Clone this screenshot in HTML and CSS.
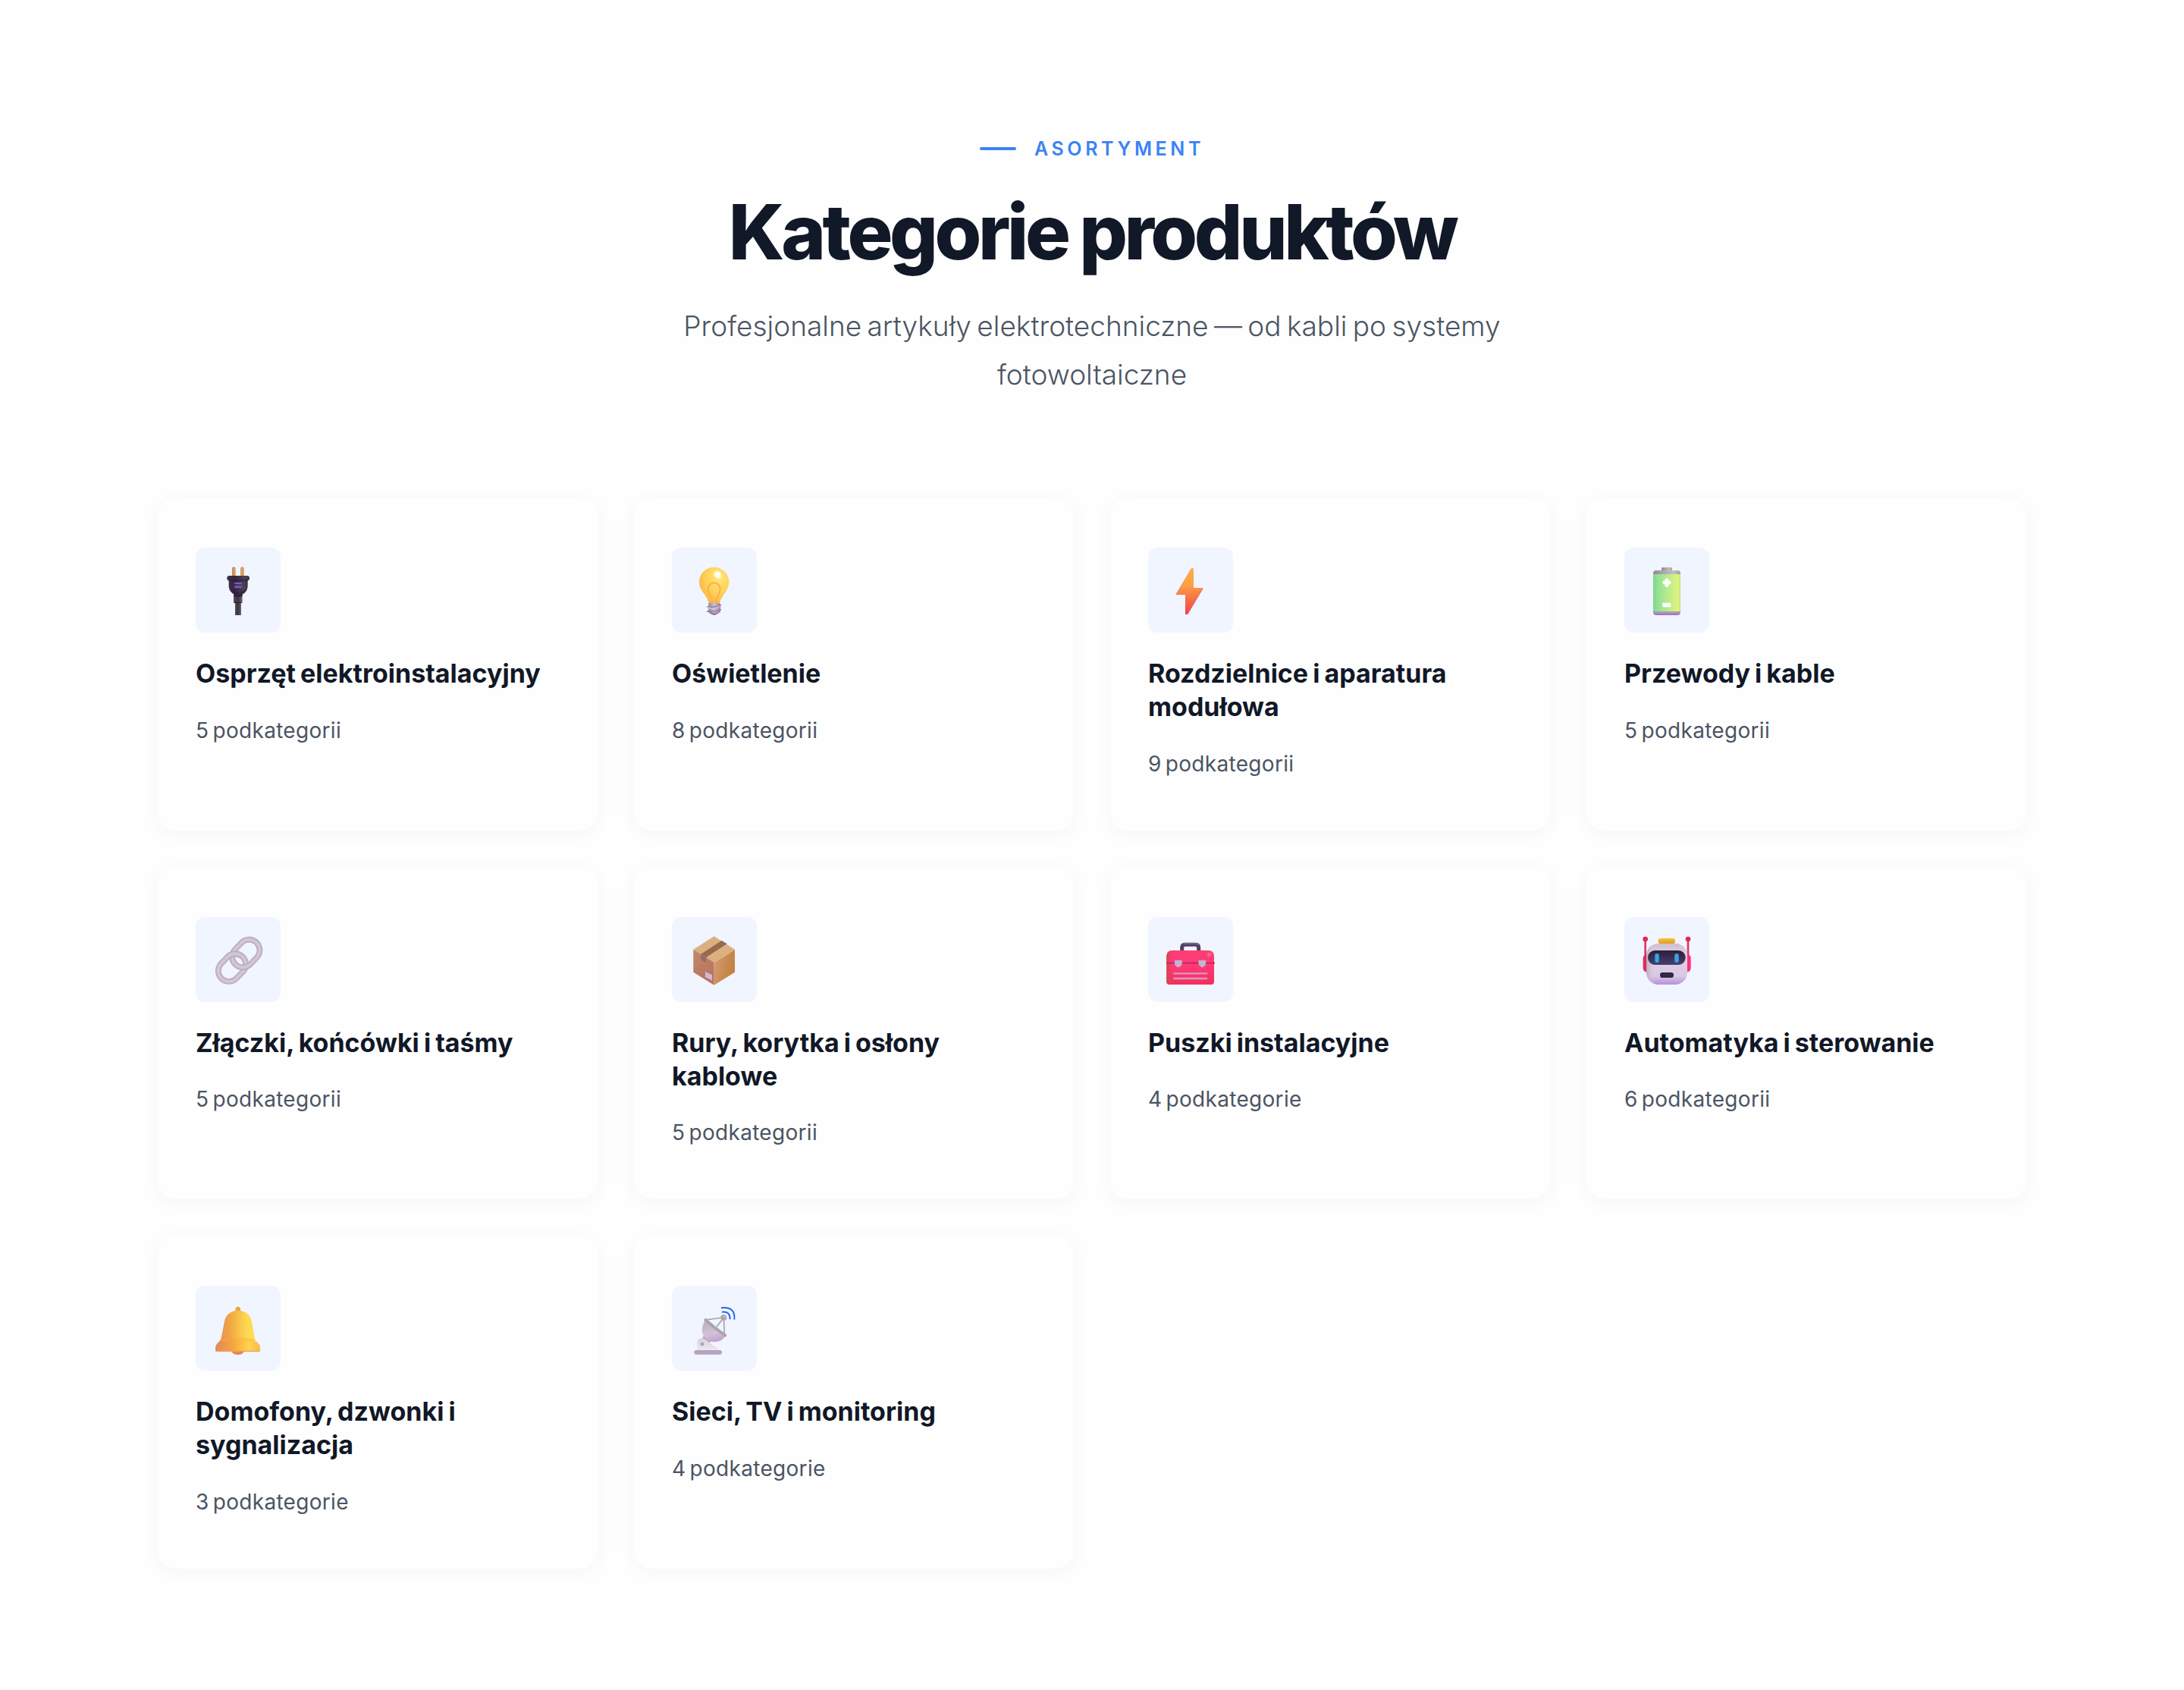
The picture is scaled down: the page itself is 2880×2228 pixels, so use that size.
FILE: index.html
```
<!DOCTYPE html>
<html lang="pl">
<head>
    <meta charset="UTF-8">
    <meta name="viewport" content="width=device-width, initial-scale=1.0">
    <title>Kategorie produktów</title>
    <link rel="stylesheet" href="styles.css">
</head>
<body>
    <section class="categories">
        <div class="section-header">
            <span class="section-tag">Asortyment</span>
            <h2 class="section-title">Kategorie produktów</h2>
            <p class="section-subtitle">Profesjonalne artykuły elektrotechniczne — od kabli po systemy fotowoltaiczne</p>
        </div>

        <div class="categories-grid">
            <div class="category-card">
                <div class="category-icon">
                    <svg viewBox="0 0 336 336">
                        <defs>
                            <linearGradient id="prong"><stop offset="0" stop-color="#c98a55"/><stop offset=".5" stop-color="#e6ab72"/><stop offset="1" stop-color="#d39560"/></linearGradient>
                            <linearGradient id="plugBody"><stop offset="0" stop-color="#3a3042"/><stop offset=".35" stop-color="#35263f"/><stop offset=".8" stop-color="#4b4352"/><stop offset="1" stop-color="#3a3042"/></linearGradient>
                            <linearGradient id="cord"><stop offset="0" stop-color="#5a535f"/><stop offset=".4" stop-color="#3b3540"/><stop offset=".75" stop-color="#4a454e"/><stop offset="1" stop-color="#77717d"/></linearGradient>
                        </defs>
                        <path d="M144 114V84q0-8 7-8t7 8v30zM177 114V84q0-8 7-8t7 8v30z" fill="url(#prong)"/>
                        <rect x="156" y="214" width="24" height="53" fill="url(#cord)"/>
                        <path d="M150 180h35v36q0 3-3 3h-29q-3 0-3-3z" fill="url(#cord)"/>
                        <path d="M150 186h35v5q-17 7-35 0zM152 216h31v3h-31z" fill="#2f1d3c"/>
                        <path d="M131 126h75v24c0 20-13 38-37 38s-38-18-38-38z" fill="url(#plugBody)"/>
                        <path d="M135 160q10 28 34 28t34-28q-14 15-34 15t-34-15z" fill="#341b49" opacity=".7"/>
                        <rect x="124" y="111" width="89" height="19" rx="9.5" fill="url(#plugBody)"/>
                        <path d="M132 128h73v3h-73z" fill="#2b173a"/>
                        <rect x="153" y="138" width="30" height="7" rx="3" fill="#8155c9"/>
                        <rect x="153" y="151" width="30" height="9" rx="3" fill="#7d50c6"/>
                    </svg>
                </div>
                <h3 class="category-name">Osprzęt elektroinstalacyjny</h3>
                <p class="category-count">5 podkategorii</p>
            </div>

            <div class="category-card">
                <div class="category-icon">
                    <svg viewBox="0 0 336 336">
                        <defs>
                            <radialGradient id="bulb" cx=".66" cy=".3" r=".75"><stop offset="0" stop-color="#ffe679"/><stop offset=".5" stop-color="#ffd45a"/><stop offset="1" stop-color="#f9b642"/></radialGradient>
                            <linearGradient id="bulbBase"><stop offset="0" stop-color="#8d7b93"/><stop offset=".5" stop-color="#cbbfcd"/><stop offset="1" stop-color="#9c88a5"/></linearGradient>
                            <radialGradient id="shine"><stop offset="0" stop-color="#fff"/><stop offset=".55" stop-color="#fffbe8"/><stop offset="1" stop-color="#ffe679" stop-opacity="0"/></radialGradient>
                        </defs>
                        <path d="M167 77c33 0 59 26 59 59 0 36-30 50-37 83h-43c-7-33-38-47-38-83 0-33 26-59 59-59z" fill="url(#bulb)"/>
                        <path d="M160 219c0-31-17-34-17-56a24 24 0 0 1 48 0c0 22-16 25-16 56" fill="none" stroke="#fcae52" stroke-width="6"/>
                        <ellipse cx="181" cy="107" rx="22" ry="19" transform="rotate(40 181 107)" fill="url(#shine)"/>
                        <path d="M145 219h45l3 8-1 28-10 5-15 7-16-7-10-7 4-8z" fill="url(#bulbBase)"/>
                        <path d="M140 233q26 7 54-6M140 252q28 5 54-7" fill="none" stroke="#8f7a9a" stroke-width="4" stroke-linecap="round"/>
                        <path d="M140 237q26 7 54-6" fill="none" stroke="#d5cad7" stroke-width="4" stroke-linecap="round"/>
                        <path d="M148 257q22 4 40-1-5 6-12 8-9 6-17 0-7-2-11-7z" fill="#9470b8"/>
                    </svg>
                </div>
                <h3 class="category-name">Oświetlenie</h3>
                <p class="category-count">8 podkategorii</p>
            </div>

            <div class="category-card">
                <div class="category-icon">
                    <svg viewBox="0 0 336 336">
                        <defs>
                            <linearGradient id="bolt" x1="0" y1="0" x2="0" y2="1"><stop offset="0" stop-color="#fcb144"/><stop offset=".35" stop-color="#fda143"/><stop offset=".65" stop-color="#f97343"/><stop offset="1" stop-color="#ee4150"/></linearGradient>
                        </defs>
                        <path d="M172 82h8v77h36q2 0 1 2l-61 103h-9v-78h-34q-3 0-2-3z" fill="url(#bolt)"/>
                        <path d="M172 82l-61 102" fill="none" stroke="#e08e50" stroke-width="2"/>
                        <path d="M216 162l-60 101" fill="none" stroke="#f2607c" stroke-width="3"/>
                        <path d="M112 185h35" fill="none" stroke="#df8350" stroke-width="2"/>
                    </svg>
                </div>
                <h3 class="category-name">Rozdzielnice i aparatura modułowa</h3>
                <p class="category-count">9 podkategorii</p>
            </div>

            <div class="category-card">
                <div class="category-icon">
                    <svg viewBox="0 0 336 336">
                        <defs>
                            <linearGradient id="cell"><stop offset="0" stop-color="#83d58d"/><stop offset=".2" stop-color="#94e395"/><stop offset=".75" stop-color="#d0f083"/><stop offset=".93" stop-color="#dcf57f"/><stop offset="1" stop-color="#c6dc7c"/></linearGradient>
                            <linearGradient id="metal"><stop offset="0" stop-color="#8f8c90"/><stop offset=".3" stop-color="#a5a3a6"/><stop offset=".75" stop-color="#c2c0c3"/><stop offset="1" stop-color="#a19fa2"/></linearGradient>
                            <linearGradient id="cellBottom" x1="0" y1="0" x2="0" y2="1"><stop offset="0" stop-color="#aaa1ad"/><stop offset=".5" stop-color="#ab90bf"/><stop offset="1" stop-color="#9768c0"/></linearGradient>
                        </defs>
                        <rect x="147" y="78" width="42" height="20" rx="4" fill="url(#metal)"/>
                        <path d="M114 106v-5q0-11 12-11h84q12 0 12 11v5z" fill="url(#metal)"/>
                        <path d="M114 252h108v4q0 11-12 11h-84q-12 0-12-11z" fill="url(#cellBottom)"/>
                        <path d="M114 105h108v147H114z" fill="url(#cell)"/>
                        <path d="M162 123h12v9h9v12h-9v10h-12v-10h-9v-12h9zM152 219h31v15h-31z" fill="#fff" stroke="#fff" stroke-width="2" stroke-linejoin="round"/>
                    </svg>
                </div>
                <h3 class="category-name">Przewody i kable</h3>
                <p class="category-count">5 podkategorii</p>
            </div>

            <div class="category-card">
                <div class="category-icon">
                    <svg viewBox="0 0 336 336">
                        <defs>
                            <g id="ring" fill="none">
                                <rect x="-60" y="-42" width="120" height="84" rx="42" stroke="#b7a8be" stroke-width="23"/>
                                <rect x="-60" y="-42" width="120" height="84" rx="42" stroke="#c5b8ca" stroke-width="17"/>
                                <rect x="-60" y="-42" width="120" height="84" rx="42" stroke="#d3c8d7" stroke-width="9"/>
                            </g>
                            <clipPath id="ringOver"><path d="M110 118h66v48h-66z"/></clipPath>
                        </defs>
                        <use href="#ring" transform="translate(144 200) rotate(-46)"/>
                        <use href="#ring" transform="translate(199 144) rotate(-46)"/>
                        <g clip-path="url(#ringOver)"><use href="#ring" transform="translate(144 200) rotate(-46)"/></g>
                    </svg>
                </div>
                <h3 class="category-name">Złączki, końcówki i taśmy</h3>
                <p class="category-count">5 podkategorii</p>
            </div>

            <div class="category-card">
                <div class="category-icon">
                    <svg viewBox="0 0 336 336">
                        <defs>
                            <linearGradient id="boxLeft" x1="0" y1="0" x2=".4" y2="1"><stop offset="0" stop-color="#c28a6b"/><stop offset="1" stop-color="#b5745c"/></linearGradient>
                            <linearGradient id="boxRight" x1="0" y1=".3" x2="1" y2=".7"><stop offset="0" stop-color="#d69a73"/><stop offset=".5" stop-color="#c98b54"/><stop offset="1" stop-color="#c1803f"/></linearGradient>
                        </defs>
                        <path d="M167 76l82 52-82 54-82-54z" fill="#dab080"/>
                        <path d="M85 128l82 52v89l-82-51z" fill="url(#boxLeft)"/>
                        <path d="M249 128l-82 52v89l82-51z" fill="url(#boxRight)"/>
                        <path d="M167 180l82-52" stroke="#e5b78c" stroke-width="3"/>
                        <path d="M197 93l21 13-82 53-21-13z" fill="#99694f"/>
                        <path d="M115 146l21 13v22l-21-12z" fill="#936f62"/>
                        <path d="M132 216l27 13v22l-27-14z" fill="#cfb8d9"/>
                    </svg>
                </div>
                <h3 class="category-name">Rury, korytka i osłony kablowe</h3>
                <p class="category-count">5 podkategorii</p>
            </div>

            <div class="category-card">
                <div class="category-icon">
                    <svg viewBox="0 0 336 336">
                        <defs>
                            <linearGradient id="tool" x1="0" y1="0" x2="0" y2="1"><stop offset="0" stop-color="#fb3f73"/><stop offset=".4" stop-color="#ff3a78"/><stop offset="1" stop-color="#f42f5e"/></linearGradient>
                            <linearGradient id="toolEdge"><stop offset="0" stop-color="#c44a4d"/><stop offset="1" stop-color="#e84359" stop-opacity="0"/></linearGradient>
                            <radialGradient id="toolShine"><stop offset="0" stop-color="#ff8ca8"/><stop offset="1" stop-color="#ff4079" stop-opacity="0"/></radialGradient>
                        </defs>
                        <path d="M134 136v-15q0-12 12-12h42q12 0 12 12v15" fill="none" stroke="#503f62" stroke-width="15"/>
                        <path d="M140 107q4-2 8-2h40q8 0 11 6" fill="none" stroke="#7d6b8c" stroke-width="4"/>
                        <path d="M73 155q0-23 23-23h142q23 0 23 23v100q0 12-12 12H85q-12 0-12-12z" fill="url(#tool)"/>
                        <path d="M73 155q0-23 23-23v135H85q-12 0-12-12z" fill="url(#toolEdge)"/>
                        <circle cx="242" cy="149" r="15" fill="url(#toolShine)"/>
                        <path d="M72 182h192" stroke="#c22453" stroke-width="5"/>
                        <path d="M105 171h29v13q0 10-15 15-14-5-14-15zM200 171h28v13q0 10-14 15-14-5-14-15z" fill="#c9b2cf" stroke="#b294bb" stroke-width="2"/>
                        <path d="M103 223h129M103 243h129" stroke="#d49bc4" stroke-width="7" stroke-linecap="round"/>
                    </svg>
                </div>
                <h3 class="category-name">Puszki instalacyjne</h3>
                <p class="category-count">4 podkategorie</p>
            </div>

            <div class="category-card">
                <div class="category-icon">
                    <svg viewBox="0 0 336 336">
                        <defs>
                            <linearGradient id="head" x1="0" y1="0" x2="0" y2="1"><stop offset="0" stop-color="#cfbfd0"/><stop offset=".3" stop-color="#dfd4e6"/><stop offset=".8" stop-color="#d9c8e3"/><stop offset="1" stop-color="#b78ed9"/></linearGradient>
                            <linearGradient id="headSide"><stop offset="0" stop-color="#b49fb6" stop-opacity=".8"/><stop offset=".2" stop-color="#d9cde0" stop-opacity="0"/></linearGradient>
                            <linearGradient id="visor" x1="0" y1="0" x2="0" y2="1"><stop offset="0" stop-color="#2c1d39"/><stop offset="1" stop-color="#48406e"/></linearGradient>
                            <linearGradient id="lamp" x1="0" y1="0" x2="0" y2="1"><stop offset="0" stop-color="#fdc52f"/><stop offset="1" stop-color="#dd9c2d"/></linearGradient>
                            <linearGradient id="ear"><stop offset="0" stop-color="#d72e58"/><stop offset="1" stop-color="#ff3080"/></linearGradient>
                        </defs>
                        <path d="M79 90h8v62h-8zM248 90h8v62h-8z" fill="#e03663"/>
                        <circle cx="83" cy="87" r="10" fill="#e5264f"/>
                        <circle cx="252" cy="87" r="10" fill="#e5264f"/>
                        <path d="M92 146v73q-18-2-18-17v-40q0-14 18-16zM245 146v73q18-2 18-17v-40q0-14-18-16z" fill="url(#ear)"/>
                        <rect x="87" y="104" width="162" height="163" rx="48" fill="url(#head)"/>
                        <rect x="87" y="104" width="162" height="163" rx="48" fill="url(#headSide)"/>
                        <rect x="134" y="84" width="67" height="21" rx="10" fill="url(#lamp)"/>
                        <rect x="93" y="132" width="149" height="57" rx="28" fill="url(#visor)"/>
                        <rect x="120" y="144" width="18" height="37" rx="9" fill="#2f94d8"/>
                        <rect x="198" y="144" width="18" height="37" rx="9" fill="#2f94d8"/>
                        <path d="M129 150v25M207 150v25" stroke="#42aaea" stroke-width="6" stroke-linecap="round"/>
                        <rect x="141" y="219" width="54" height="21" rx="10" fill="#33264a"/>
                    </svg>
                </div>
                <h3 class="category-name">Automatyka i sterowanie</h3>
                <p class="category-count">6 podkategorii</p>
            </div>

            <div class="category-card">
                <div class="category-icon">
                    <svg viewBox="0 0 336 336">
                        <defs>
                            <linearGradient id="bell"><stop offset="0" stop-color="#dd8a5e"/><stop offset=".3" stop-color="#f1a342"/><stop offset=".7" stop-color="#ffd851"/><stop offset=".9" stop-color="#ffdf5c"/><stop offset="1" stop-color="#f9b74b"/></linearGradient>
                            <linearGradient id="bellLip"><stop offset="0" stop-color="#e0885c"/><stop offset=".4" stop-color="#f6a63c"/><stop offset=".75" stop-color="#ffd44f"/><stop offset="1" stop-color="#fbb84a"/></linearGradient>
                        </defs>
                        <ellipse cx="167" cy="259" rx="24" ry="14" fill="#ea8450"/>
                        <path d="M158 104V92q0-9 9-9t10 9v12z" fill="#eda136"/>
                        <path d="M168 98c29 0 49 17 54 43l12 69c2 12 20 18 21 33v13q0 5-5 5H84q-5 0-5-5v-13c1-15 18-20 22-35l13-67c5-26 25-43 54-43z" fill="url(#bell)"/>
                        <path d="M97 221q70-14 142 0 15 9 16 24v11q0 5-5 5H84q-5 0-5-5v-11q2-15 18-24z" fill="url(#bellLip)"/>
                        <path d="M102 216q66-10 132 0" fill="none" stroke="#f6ab3c" stroke-width="9" opacity=".4"/>
                        <path d="M82 259h170" stroke="#f59a6a" stroke-width="4" stroke-linecap="round"/>
                    </svg>
                </div>
                <h3 class="category-name">Domofony, dzwonki i sygnalizacja</h3>
                <p class="category-count">3 podkategorie</p>
            </div>

            <div class="category-card">
                <div class="category-icon">
                    <svg viewBox="0 0 336 336">
                        <defs>
                            <linearGradient id="dish" x1=".3" y1="0" x2=".6" y2="1"><stop offset="0" stop-color="#bfb2c1"/><stop offset=".6" stop-color="#d1c2d5"/><stop offset="1" stop-color="#bda0d3"/></linearGradient>
                            <linearGradient id="stand" x1="0" y1="0" x2="0" y2="1"><stop offset="0" stop-color="#d9d0dd"/><stop offset="1" stop-color="#efe7f4"/></linearGradient>
                            <linearGradient id="foot" x1="0" y1="0" x2="0" y2="1"><stop offset="0" stop-color="#aaa4ac"/><stop offset=".5" stop-color="#b4a9b9"/><stop offset="1" stop-color="#b996d8"/></linearGradient>
                        </defs>
                        <path d="M126 198l30 18-7 10-29-16z" fill="#aaa5ad"/>
                        <path d="M100 258v-30q0-20 20-20 6 0 12 4l49 37q7 5 9 9z" fill="url(#stand)"/>
                        <circle cx="120" cy="231" r="6" fill="#b1a8b6" stroke="#988f9d" stroke-width="2"/>
                        <rect x="88" y="255" width="110" height="17" rx="8" fill="url(#foot)"/>
                        <path d="M131 138c-21 31-14 83 36 84 22 0 36-8 44-23z" fill="url(#dish)"/>
                        <path d="M133 135l72-9-28 37M205 126l3 70" fill="none" stroke="#a6a2a8" stroke-width="5"/>
                        <path d="M133 135q36 34 78 61" fill="none" stroke="#aaa5ab" stroke-width="12" stroke-linecap="round"/>
                        <circle cx="205" cy="126" r="12" fill="#aaa5ab"/>
                        <circle cx="208" cy="122" r="5" fill="#bdb9be"/>
                        <path d="M198 104q32-5 32 29M195 88q57-7 52 46" fill="none" stroke="#2865e9" stroke-width="6"/>
                    </svg>
                </div>
                <h3 class="category-name">Sieci, TV i monitoring</h3>
                <p class="category-count">4 podkategorie</p>
            </div>
        </div>
    </section>
</body>
</html>
```

FILE: styles.css
```
* {
    margin: 0;
    padding: 0;
    box-sizing: border-box;
}
body {
    font-family: Inter, 'Open Sans', sans-serif;
    background-color: #fefefe;
    color: #111827;
}
.categories {
    max-width: 2560px;
    min-height: 2228px;
    margin: 0 auto;
    padding: 176px 48px 156px;
}
.section-header {
    display: flex;
    flex-direction: column;
    align-items: center;
    max-width: 1200px;
    margin: 0 auto 130px;
    text-align: center;
}
.section-tag {
    display: inline-flex;
    align-items: center;
    gap: 24px;
    margin-bottom: 35px;
    font-size: 25px;
    font-weight: 600;
    line-height: 40px;
    letter-spacing: 4.6px;
    text-transform: uppercase;
    color: #3b82f6;
}
.section-tag::before {
    content: '';
    width: 48px;
    height: 4px;
    border-radius: 2px;
    background: #3b82f6;
}
.section-title {
    margin-bottom: 37px;
    font-size: 100px;
    font-weight: 800;
    line-height: 110px;
    letter-spacing: -4.4px;
    word-spacing: -2px;
}
.section-subtitle {
    font-size: 37px;
    font-weight: 300;
    line-height: 64px;
    letter-spacing: 0;
    word-spacing: -3px;
    color: #4b5563;
}
.categories-grid {
    display: grid;
    grid-template-columns: repeat(4, 1fr);
    gap: 48px;
}
.category-card {
    padding: 66px 50px;
    border-radius: 24px;
    background: #fefefe;
    box-shadow: 0 4px 24px rgba(0, 0, 0, 0.04);
}
.category-icon {
    width: 112px;
    height: 112px;
    margin-bottom: 32px;
    border-radius: 12px;
    background: #f0f5ff;
}
.category-icon svg {
    display: block;
    width: 100%;
    height: 100%;
}
.category-name {
    margin-bottom: 30.6px;
    font-size: 34px;
    font-weight: 700;
    line-height: 44px;
    letter-spacing: 0;
    word-spacing: -2px;
}
.category-count {
    font-size: 28px;
    line-height: 44px;
    letter-spacing: 0.3px;
    word-spacing: -3px;
    color: #4b5563;
}
```
